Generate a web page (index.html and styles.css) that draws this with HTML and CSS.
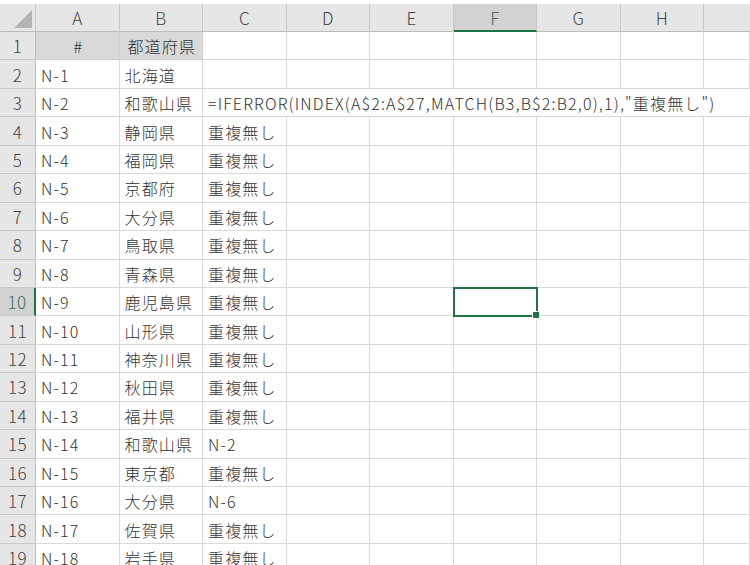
FILE: index.html
```html
<!DOCTYPE html>
<html lang="ja">
<head>
<meta charset="utf-8">
<link rel="stylesheet" href="styles.css">
</head>
<body>
<div class="topstrip"></div>
<div class="sheet">
  <div class="row head">
    <div class="corner"><span class="tri"></span></div>
    <div class="ch">A</div><div class="ch">B</div><div class="ch">C</div><div class="ch">D</div><div class="ch">E</div><div class="ch sel">F</div><div class="ch">G</div><div class="ch">H</div><div class="ch last"></div>
  </div>
  <div class="row">
    <div class="rh">1</div>
    <div class="c fill center">#</div><div class="c fill center">都道府県</div><div class="c"></div><div class="c"></div><div class="c"></div><div class="c"></div><div class="c"></div><div class="c"></div><div class="c"></div>
  </div>
  <div class="row">
    <div class="rh">2</div>
    <div class="c">N-1</div><div class="c">北海道</div><div class="c"></div><div class="c"></div><div class="c"></div><div class="c"></div><div class="c"></div><div class="c"></div><div class="c"></div>
  </div>
  <div class="row">
    <div class="rh">3</div>
    <div class="c">N-2</div><div class="c">和歌山県</div><div class="c over formula">=IFERROR(INDEX(A$2:A$27,MATCH(B3,B$2:B2,0),1),"重複無し")</div><div class="c over"></div><div class="c over"></div><div class="c over"></div><div class="c over"></div><div class="c over"></div><div class="c over"></div>
  </div>
  <div class="row">
    <div class="rh">4</div>
    <div class="c">N-3</div><div class="c">静岡県</div><div class="c">重複無し</div><div class="c"></div><div class="c"></div><div class="c"></div><div class="c"></div><div class="c"></div><div class="c"></div>
  </div>
  <div class="row">
    <div class="rh">5</div>
    <div class="c">N-4</div><div class="c">福岡県</div><div class="c">重複無し</div><div class="c"></div><div class="c"></div><div class="c"></div><div class="c"></div><div class="c"></div><div class="c"></div>
  </div>
  <div class="row">
    <div class="rh">6</div>
    <div class="c">N-5</div><div class="c">京都府</div><div class="c">重複無し</div><div class="c"></div><div class="c"></div><div class="c"></div><div class="c"></div><div class="c"></div><div class="c"></div>
  </div>
  <div class="row">
    <div class="rh">7</div>
    <div class="c">N-6</div><div class="c">大分県</div><div class="c">重複無し</div><div class="c"></div><div class="c"></div><div class="c"></div><div class="c"></div><div class="c"></div><div class="c"></div>
  </div>
  <div class="row">
    <div class="rh">8</div>
    <div class="c">N-7</div><div class="c">鳥取県</div><div class="c">重複無し</div><div class="c"></div><div class="c"></div><div class="c"></div><div class="c"></div><div class="c"></div><div class="c"></div>
  </div>
  <div class="row">
    <div class="rh">9</div>
    <div class="c">N-8</div><div class="c">青森県</div><div class="c">重複無し</div><div class="c"></div><div class="c"></div><div class="c"></div><div class="c"></div><div class="c"></div><div class="c"></div>
  </div>
  <div class="row">
    <div class="rh rsel">10</div>
    <div class="c">N-9</div><div class="c">鹿児島県</div><div class="c">重複無し</div><div class="c"></div><div class="c"></div><div class="c active"><span class="handle"></span></div><div class="c"></div><div class="c"></div><div class="c"></div>
  </div>
  <div class="row">
    <div class="rh">11</div>
    <div class="c">N-10</div><div class="c">山形県</div><div class="c">重複無し</div><div class="c"></div><div class="c"></div><div class="c"></div><div class="c"></div><div class="c"></div><div class="c"></div>
  </div>
  <div class="row">
    <div class="rh">12</div>
    <div class="c">N-11</div><div class="c">神奈川県</div><div class="c">重複無し</div><div class="c"></div><div class="c"></div><div class="c"></div><div class="c"></div><div class="c"></div><div class="c"></div>
  </div>
  <div class="row">
    <div class="rh">13</div>
    <div class="c">N-12</div><div class="c">秋田県</div><div class="c">重複無し</div><div class="c"></div><div class="c"></div><div class="c"></div><div class="c"></div><div class="c"></div><div class="c"></div>
  </div>
  <div class="row">
    <div class="rh">14</div>
    <div class="c">N-13</div><div class="c">福井県</div><div class="c">重複無し</div><div class="c"></div><div class="c"></div><div class="c"></div><div class="c"></div><div class="c"></div><div class="c"></div>
  </div>
  <div class="row">
    <div class="rh">15</div>
    <div class="c">N-14</div><div class="c">和歌山県</div><div class="c">N-2</div><div class="c"></div><div class="c"></div><div class="c"></div><div class="c"></div><div class="c"></div><div class="c"></div>
  </div>
  <div class="row">
    <div class="rh">16</div>
    <div class="c">N-15</div><div class="c">東京都</div><div class="c">重複無し</div><div class="c"></div><div class="c"></div><div class="c"></div><div class="c"></div><div class="c"></div><div class="c"></div>
  </div>
  <div class="row">
    <div class="rh">17</div>
    <div class="c">N-16</div><div class="c">大分県</div><div class="c">N-6</div><div class="c"></div><div class="c"></div><div class="c"></div><div class="c"></div><div class="c"></div><div class="c"></div>
  </div>
  <div class="row">
    <div class="rh">18</div>
    <div class="c">N-17</div><div class="c">佐賀県</div><div class="c">重複無し</div><div class="c"></div><div class="c"></div><div class="c"></div><div class="c"></div><div class="c"></div><div class="c"></div>
  </div>
  <div class="row">
    <div class="rh">19</div>
    <div class="c">N-18</div><div class="c">岩手県</div><div class="c">重複無し</div><div class="c"></div><div class="c"></div><div class="c"></div><div class="c"></div><div class="c"></div><div class="c"></div>
  </div>
</div>
</body>
</html>
```
FILE: styles.css
```css
html, body {
  margin: 0;
  padding: 0;
  background: #ffffff;
}
body {
  width: 750px;
  height: 565px;
  overflow: hidden;
  font-family: "Noto Sans CJK JP", "Noto Sans", sans-serif;
  font-weight: 300;
  color: #333333;
}
.topstrip {
  height: 4px;
  background: #ffffff;
}
.sheet {
  display: flex;
  flex-direction: column;
}
.row {
  display: grid;
  grid-template-columns: 36px repeat(8, 83.5px) 1fr;
  height: 28.45px;
  box-sizing: border-box;
}
.row.head {
  height: 28px;
}
.corner {
  background: #e6e6e6;
  border-right: 1px solid #c8c8c8;
  border-bottom: 1px solid #bcbcbc;
  box-sizing: border-box;
  position: relative;
}
.tri {
  position: absolute;
  right: 3px;
  bottom: 3px;
  width: 0;
  height: 0;
  border-left: 18px solid transparent;
  border-bottom: 18px solid #b4b4b4;
}
.ch {
  background: #e6e6e6;
  border-right: 1px solid #c8c8c8;
  border-bottom: 1px solid #bcbcbc;
  box-sizing: border-box;
  display: flex;
  align-items: center;
  justify-content: center;
  font-size: 17px;
  color: #444444;
}
.ch.sel {
  background: #d2d2d2;
  border-bottom: 2px solid #217346;
  color: #3f6f5c;
}
.ch.last {
  border-right: none;
}
.rh {
  background: #e6e6e6;
  border-right: 1px solid #bcbcbc;
  border-bottom: 1px solid #c8c8c8;
  box-sizing: border-box;
  display: flex;
  align-items: center;
  justify-content: center;
  font-size: 17px;
  letter-spacing: 0.5px;
  color: #444444;
}
.rh.rsel {
  background: #d2d2d2;
  border-right: 2px solid #217346;
  color: #3f6f5c;
}
.c {
  border-right: 1px solid #d9d9d9;
  border-bottom: 1px solid #d9d9d9;
  box-sizing: border-box;
  display: flex;
  align-items: center;
  padding: 1px 3px 0 5px;
  font-size: 16px;
  letter-spacing: 1.15px;
  white-space: nowrap;
  min-width: 0;
  position: relative;
}
.c.fill {
  background: #d9d9d9;
  border-right-color: #d0d0d0;
  border-bottom-color: #d0d0d0;
}
.c.center {
  justify-content: center;
}
.c.over {
  border-right: none;
}
.c.formula {
  overflow: visible;
  z-index: 1;
}
.c.active {
  outline: 2px solid #217346;
  outline-offset: -1px;
  z-index: 2;
}
.handle {
  position: absolute;
  right: -4px;
  bottom: -4px;
  width: 6px;
  height: 6px;
  background: #217346;
  border: 1px solid #ffffff;
}
```
